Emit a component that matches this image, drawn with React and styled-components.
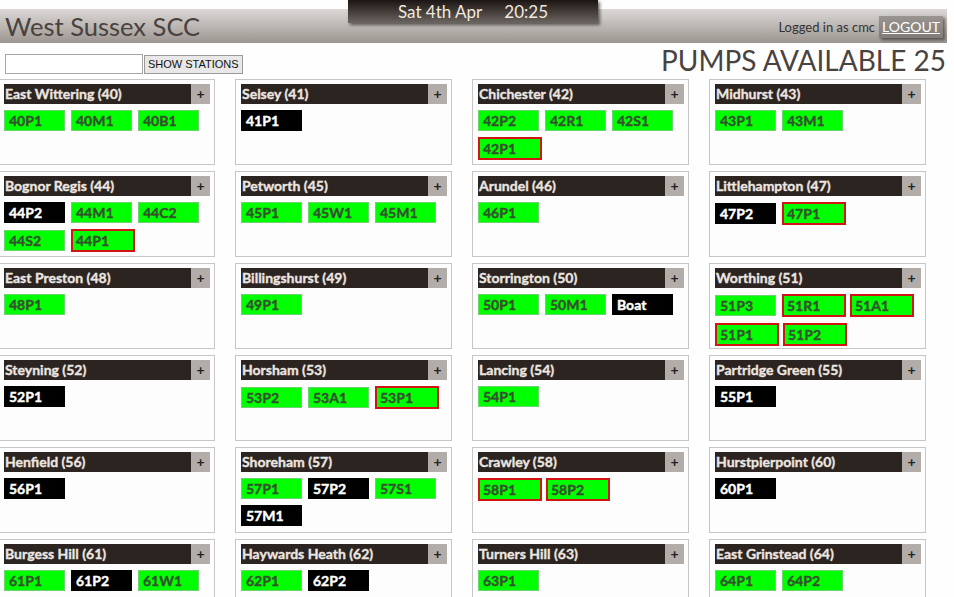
import React from "react";
import styled, { createGlobalStyle } from "styled-components";

const Global = createGlobalStyle`
  html, body { margin: 0; padding: 0; background: #fefefe; overflow: hidden; }
  body { font-family: Lato, "Open Sans", sans-serif; }
`;

const Page = styled.div`
  width: 954px;
  height: 597px;
  overflow: hidden;
  padding-top: 9px;
  box-sizing: border-box;
  position: relative;
`;

const TopBar = styled.header`
  height: 34px;
  width: 947px;
  display: flex;
  align-items: center;
  justify-content: space-between;
  background: linear-gradient(#dcd8d5, #9c9691);
  box-sizing: border-box;
  padding: 0 4px 0 5px;
`;

const Title = styled.h1`
  margin: 0;
  font-family: Lato, sans-serif;
  font-weight: 400;
  font-size: 25.5px;
  color: #4a423e;
`;

const DateTab = styled.div`
  position: absolute;
  top: 0;
  left: 348px;
  width: 250px;
  height: 23px;
  background: linear-gradient(#1b1513, #6c6460);
  box-shadow: 2px 2px 3px rgba(0, 0, 0, 0.55);
  display: flex;
  justify-content: center;
  align-items: center;
  gap: 22px;
  color: #f1e9dd;
  font-size: 17px;
`;

const Login = styled.div`
  display: flex;
  align-items: center;
  gap: 4px;
  font-size: 13px;
  color: #333;
  margin-top: 1px;
`;

const LogoutButton = styled.a`
  display: inline-block;
  background: linear-gradient(#9a9490, #827c78);
  color: #fff;
  text-decoration: underline;
  font-size: 14px;
  padding: 3px 3px;
  box-shadow: 2px 2px 3px rgba(0, 0, 0, 0.5);
  line-height: 16px;
`;

const Toolbar = styled.div`
  display: flex;
  justify-content: space-between;
  align-items: flex-start;
  height: 36px;
  padding: 0 8px 0 5px;
`;

const Search = styled.form`
  display: flex;
  align-items: center;
  margin-top: 11px;
`;

const SearchInput = styled.input`
  width: 138px;
  height: 20px;
  box-sizing: border-box;
  border: 1px solid #a8a8a8;
  background: #fff;
  padding: 0;
  margin: 0;
`;

const ShowButton = styled.button`
  height: 19px;
  box-sizing: border-box;
  border: 1px solid #9a9a9a;
  background: #e8e8e8;
  font-family: "Liberation Sans", Arial, sans-serif;
  font-size: 11px;
  padding: 0 3px;
  margin-left: 1px;
  color: #111;
`;

const Pumps = styled.div`
  font-size: 28px;
  color: #4a423e;
  line-height: 28px;
  margin-top: 3px;
`;

const Grid = styled.div`
  display: grid;
  grid-template-columns: repeat(4, 217px);
  column-gap: 20px;
  row-gap: 6px;
  margin-left: -2px;
`;

const Card = styled.section`
  height: 86px;
  box-sizing: border-box;
  border: 1px solid #c9c5c5;
  background: #fdfdfd;
  padding: 4px 4px 0 5px;
`;

const CardHead = styled.div`
  display: flex;
  height: 20px;
`;

const StationName = styled.div`
  flex: 1;
  background: #2c2421;
  color: #ece6e0;
  font-weight: 700;
  font-size: 14px;
  -webkit-text-stroke: 0.35px currentColor;
  line-height: 20px;
  padding-left: 1px;
  white-space: nowrap;
  overflow: hidden;
`;

const Plus = styled.div`
  width: 19px;
  background: #b3adaa;
  color: #222;
  font-weight: 700;
  font-size: 14px;
  text-align: center;
  line-height: 20px;
`;

const Appliances = styled.div`
  display: flex;
  flex-wrap: wrap;
  align-items: center;
  column-gap: 6px;
  row-gap: 6px;
  margin-top: 6px;
`;

const Appliance = styled.div`
  box-sizing: border-box;
  width: ${(p) => (p.$alert ? "64px" : "61px")};
  height: ${(p) => (p.$alert ? "23px" : "21px")};
  margin: ${(p) => (p.$alert ? "0 -2px 0 0" : "0")};
  background: ${(p) => (p.$crewed ? "#000" : "#00ff00")};
  color: ${(p) => (p.$crewed ? "#fff" : "#35502f")};
  border: ${(p) =>
    p.$alert ? "2px solid #d41414" : p.$crewed ? "1px solid #000" : "1px solid #6dd46d"};
  font-weight: 700;
  font-size: 14px;
  -webkit-text-stroke: 0.4px currentColor;
  line-height: 19px;
  padding-left: ${(p) => (p.$alert ? "3px" : "4px")};
`;

// g = available, b = crewed/committed, r = alert
const stations = [
  ["East Wittering (40)", "40P1 g,40M1 g,40B1 g"],
  ["Selsey (41)", "41P1 b"],
  ["Chichester (42)", "42P2 g,42R1 g,42S1 g,42P1 r"],
  ["Midhurst (43)", "43P1 g,43M1 g"],
  ["Bognor Regis (44)", "44P2 b,44M1 g,44C2 g,44S2 g,44P1 r"],
  ["Petworth (45)", "45P1 g,45W1 g,45M1 g"],
  ["Arundel (46)", "46P1 g"],
  ["Littlehampton (47)", "47P2 b,47P1 r"],
  ["East Preston (48)", "48P1 g"],
  ["Billingshurst (49)", "49P1 g"],
  ["Storrington (50)", "50P1 g,50M1 g,Boat b"],
  ["Worthing (51)", "51P3 g,51R1 r,51A1 r,51P1 r,51P2 r"],
  ["Steyning (52)", "52P1 b"],
  ["Horsham (53)", "53P2 g,53A1 g,53P1 r"],
  ["Lancing (54)", "54P1 g"],
  ["Partridge Green (55)", "55P1 b"],
  ["Henfield (56)", "56P1 b"],
  ["Shoreham (57)", "57P1 g,57P2 b,57S1 g,57M1 b"],
  ["Crawley (58)", "58P1 r,58P2 r"],
  ["Hurstpierpoint (60)", "60P1 b"],
  ["Burgess Hill (61)", "61P1 g,61P2 b,61W1 g"],
  ["Haywards Heath (62)", "62P1 g,62P2 b"],
  ["Turners Hill (63)", "63P1 g"],
  ["East Grinstead (64)", "64P1 g,64P2 g"],
];

export default function App() {
  return (
    <Page>
      <Global />
      <TopBar>
        <Title>West Sussex SCC</Title>
        <Login>
          <span>Logged in as cmc</span>
          <LogoutButton href="#">LOGOUT</LogoutButton>
        </Login>
      </TopBar>
      <DateTab>
        <span>Sat 4th Apr</span>
        <span>20:25</span>
      </DateTab>
      <Toolbar>
        <Search onSubmit={(e) => e.preventDefault()}>
          <SearchInput type="text" />
          <ShowButton type="submit">SHOW STATIONS</ShowButton>
        </Search>
        <Pumps>PUMPS AVAILABLE 25</Pumps>
      </Toolbar>
      <Grid>
        {stations.map(([name, list]) => (
          <Card key={name}>
            <CardHead>
              <StationName>{name}</StationName>
              <Plus>+</Plus>
            </CardHead>
            <Appliances>
              {list.split(",").map((item) => {
                const [code, state] = item.split(" ");
                return (
                  <Appliance key={code} $crewed={state === "b"} $alert={state === "r"}>
                    {code}
                  </Appliance>
                );
              })}
            </Appliances>
          </Card>
        ))}
      </Grid>
    </Page>
  );
}
